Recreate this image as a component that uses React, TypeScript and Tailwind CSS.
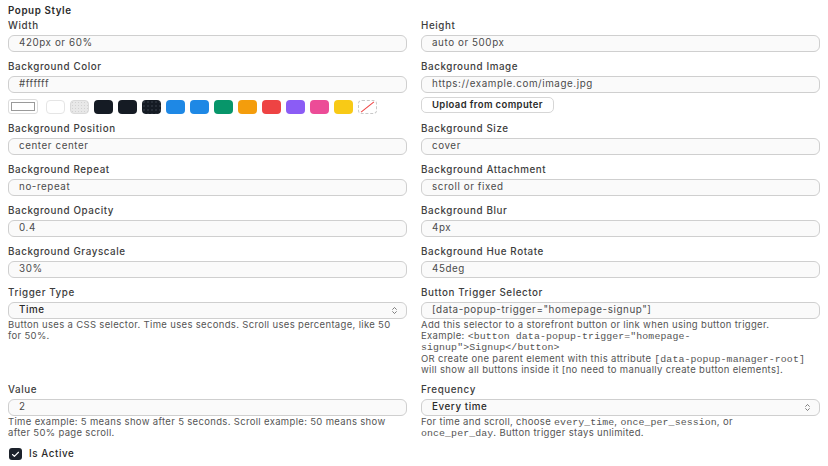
import { Check, ChevronsUpDown } from 'lucide-react';

const swatches = [
    { key: 'white', className: 'bg-white border border-[#e5e5e5]' },
    { key: 'gray', className: 'bg-[#e8e8e8] border border-[#dadada] bg-[radial-gradient(#d2d2d2_0.5px,transparent_0.7px)] bg-[length:3px_3px]' },
    { key: 'ink', className: 'bg-[#151b24]' },
    { key: 'ink2', className: 'bg-[#151b24]' },
    { key: 'dots', className: 'bg-[#151b24] bg-[radial-gradient(#6b7280_0.55px,transparent_0.75px)] bg-[length:4px_4px]' },
    { key: 'blue', className: 'bg-[#1e88e5]' },
    { key: 'blue2', className: 'bg-[#1e88e5]' },
    { key: 'green', className: 'bg-[#07966a]' },
    { key: 'orange', className: 'bg-[#f49d0c]' },
    { key: 'red', className: 'bg-[#ee4343]' },
    { key: 'purple', className: 'bg-[#8b5cf5]' },
    { key: 'pink', className: 'bg-[#ec4c97]' },
    { key: 'yellow', className: 'bg-[#f8ca16]' },
];

const Label = ({ children }: { children: React.ReactNode }) => (
    <div className="text-[9.8px] leading-[12px] font-medium text-[#3d3d3d] tracking-[0.06em] mb-[3px]">{children}</div>
);

const TextBox = ({ value }: { value: string }) => (
    <div className="h-[17px] flex items-center rounded-[6px] border border-[#cfcfcf] bg-[#fafafa] pl-[10px] text-[9.8px] text-[#4a4a4a] tracking-[0.06em]">
        {value}
    </div>
);

const SelectBox = ({ value }: { value: string }) => (
    <div className="h-[17px] flex items-center justify-between rounded-[6px] border border-[#cfcfcf] bg-[#fafafa] pl-[10px] pr-[7px] text-[9.8px] font-medium text-[#2a2a2a] tracking-[0.06em]">
        <span>{value}</span>
        <ChevronsUpDown size={9} strokeWidth={2} className="text-[#555]" />
    </div>
);

const Help = ({ children }: { children: React.ReactNode }) => (
    <div className="text-[9.5px] leading-[11.2px] text-[#555] tracking-[0.035em]">{children}</div>
);

// line-height 0 keeps the mono font from stretching the help text's lines
const Mono = ({ children }: { children: React.ReactNode }) => (
    <span className="font-['Liberation_Mono',monospace] text-[9.9px] leading-[0] tracking-[0.01em]">{children}</span>
);

const Field = ({ label, value }: { label: string; value: string }) => (
    <div>
        <Label>{label}</Label>
        <TextBox value={value} />
    </div>
);

export default function App() {
    return (
        <div className="w-[828px] h-[466px] bg-white px-[8px] pt-[5px] font-['Inter',sans-serif] overflow-hidden">
            <div className="text-[9.8px] leading-[12px] font-semibold text-[#2b2b2b] tracking-[0.06em] mb-[3px]">Popup Style</div>

            <div className="grid grid-cols-2 gap-x-[14px] gap-y-[9px]">
                <Field label="Width" value="420px or 60%" />
                <Field label="Height" value="auto or 500px" />

                {/* Background colour with swatches */}
                <div>
                    <Label>Background Color</Label>
                    <TextBox value="#ffffff" />
                    <div className="flex items-center gap-[5px] mt-[6px]">
                        <div className="w-[30px] h-[15px] rounded-[3px] border border-[#dcdcdc] p-[2px] mr-[3px]">
                            <div className="w-full h-full border border-[#9a9a9a] bg-white" />
                        </div>
                        {swatches.map((s) => (
                            <div key={s.key} className={`w-[19px] h-[14px] rounded-[4px] ${s.className}`} />
                        ))}
                        <div className="w-[19px] h-[14px] rounded-[4px] border border-dashed border-[#c8c8c8] bg-white overflow-hidden">
                            <svg viewBox="0 0 19 14" className="w-full h-full">
                                <line x1="2" y1="13" x2="17" y2="1" stroke="#ef4444" strokeWidth="1.2" />
                            </svg>
                        </div>
                    </div>
                </div>
                <div>
                    <Label>Background Image</Label>
                    <TextBox value="https://example.com/image.jpg" />
                    <button className="mt-[4px] h-[16px] px-[10px] rounded-[5px] border border-[#d6d6d6] bg-white text-[9.5px] font-semibold text-[#2a2a2a] tracking-[0.04em] flex items-center">
                        Upload from computer
                    </button>
                </div>

                <Field label="Background Position" value="center center" />
                <Field label="Background Size" value="cover" />
                <Field label="Background Repeat" value="no-repeat" />
                <Field label="Background Attachment" value="scroll or fixed" />
                <Field label="Background Opacity" value="0.4" />
                <Field label="Background Blur" value="4px" />
                <Field label="Background Grayscale" value="30%" />
                <Field label="Background Hue Rotate" value="45deg" />

                <div>
                    <Label>Trigger Type</Label>
                    <SelectBox value="Time" />
                    <Help>Button uses a CSS selector. Time uses seconds. Scroll uses percentage, like 50 for 50%.</Help>
                </div>
                <div>
                    <Label>Button Trigger Selector</Label>
                    <TextBox value={'[data-popup-trigger="homepage-signup"]'} />
                    <Help>
                        Add this selector to a storefront button or link when using button trigger.
                        <br />
                        Example: <Mono>{'<button data-popup-trigger="homepage-signup">Signup</button>'}</Mono>
                        <br />
                        OR create one parent element with this attribute <Mono>[data-popup-manager-root]</Mono> will show all buttons inside it [no need to manually create button elements].
                    </Help>
                </div>

                <div>
                    <Label>Value</Label>
                    <TextBox value="2" />
                    <Help>Time example: 5 means show after 5 seconds. Scroll example: 50 means show after 50% page scroll.</Help>
                </div>
                <div>
                    <Label>Frequency</Label>
                    <SelectBox value="Every time" />
                    <Help>
                        For time and scroll, choose <Mono>every_time</Mono>, <Mono>once_per_session</Mono>, or
                        <br />
                        <Mono>once_per_day</Mono>. Button trigger stays unlimited.
                    </Help>
                </div>
            </div>

            <div className="flex items-center gap-[7px] mt-[10px] pl-[1px]">
                <div className="w-[13px] h-[12px] rounded-[3px] bg-[#1c222b] flex items-center justify-center">
                    <Check size={9} strokeWidth={3} className="text-white" />
                </div>
                <span className="text-[9.8px] leading-[12px] font-medium text-[#2a2a2a] tracking-[0.06em]">Is Active</span>
            </div>
        </div>
    );
}
